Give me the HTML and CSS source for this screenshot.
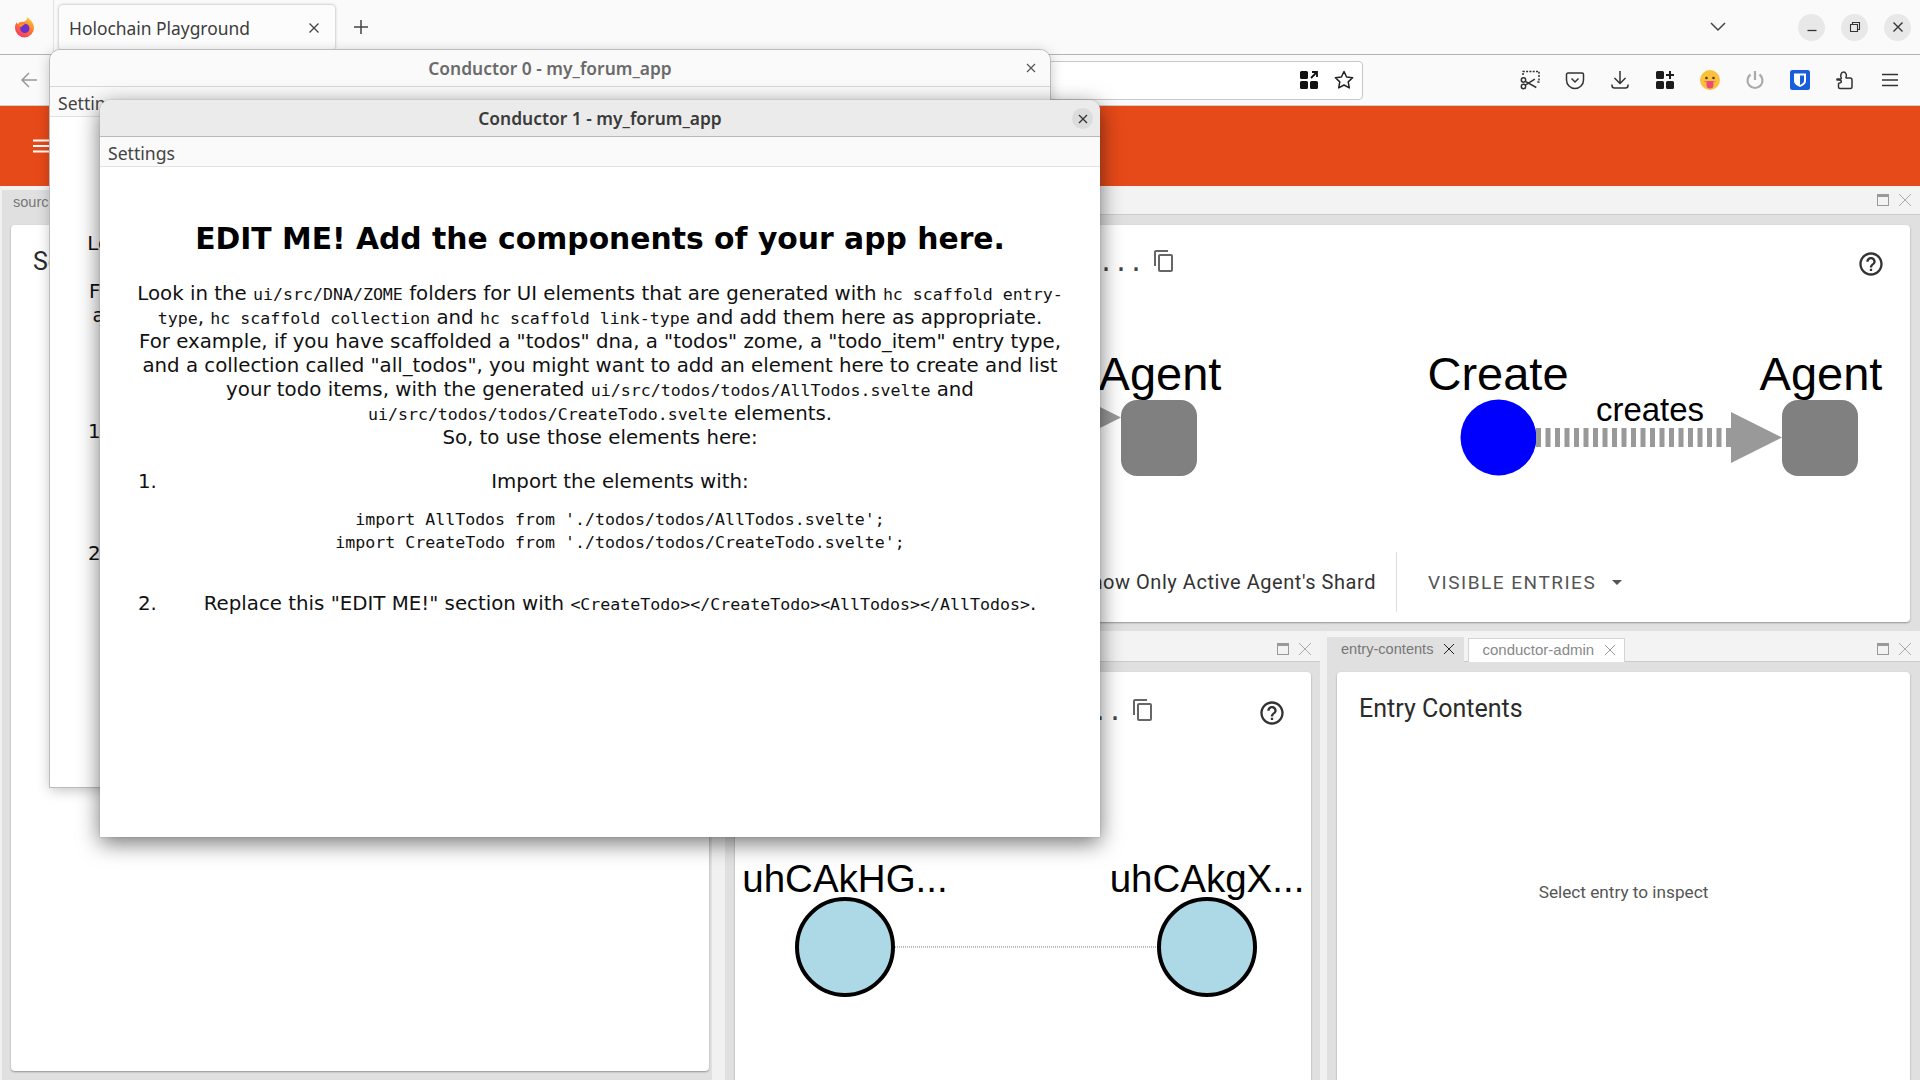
FILE: index.html
```html
<!DOCTYPE html>
<html lang="en">
<head>
  <meta charset="UTF-8" />
  <meta name="viewport" content="width=device-width, initial-scale=1.0"/>
  <title>Holochain Playground</title>
  <link rel="stylesheet" href="styles.css">
</head>
<body>

  <!-- browser chrome -->
  <div class="tabbar">
    <div class="ff-logo">
      <svg width="23" height="23" viewBox="0 0 20 20">
        <defs>
          <linearGradient id="ffg" x1="0.8" y1="0" x2="0.2" y2="1">
            <stop offset="0" stop-color="#ffd53a"/>
            <stop offset="0.45" stop-color="#ff7a2e"/>
            <stop offset="1" stop-color="#f0356c"/>
          </linearGradient>
        </defs>
        <path d="M12.5 1c2 1.6 5.8 4.6 5.8 9.2A8.3 8.3 0 0 1 10 18.6a8.3 8.3 0 0 1-8.3-8.4c0-2 .6-3.6 1.6-4.8.2 1 .6 1.500 1.100 1.800C5.300 5.300 7 4.800 9 5.200c1.800-.8 3.500-2.200 3.500-4.200z" fill="url(#ffg)"/>
        <circle cx="10.300" cy="10.800" r="4" fill="#6b2fd0"/>
        <path d="M4.500 7.500c2-1.200 4.500-1 6 0-1.500.2-2.500 1-3 2-1.200-.2-2.300-.8-3-2z" fill="#ff8a2a"/>
      </svg>
    </div>
    <div class="tab">
      <span class="tab-title">Holochain Playground</span>
      <svg class="tab-close" width="12" height="12" viewBox="0 0 12 12"><path d="M1.500 1.500l9 9M10.500 1.500l-9 9" stroke="#444" stroke-width="1.300" fill="none"/></svg>
    </div>
    <svg class="new-tab" width="16" height="16" viewBox="0 0 16 16"><path d="M8 1v14M1 8h14" stroke="#444" stroke-width="1.500"/></svg>
    <div class="tabbar-space"></div>
    <svg class="tab-list" width="16" height="10" viewBox="0 0 16 10"><path d="M1 1l7 7 7-7" stroke="#444" stroke-width="1.500" fill="none"/></svg>
    <div class="win-btns">
      <div class="win-btn"><svg width="12" height="12" viewBox="0 0 12 12"><path d="M1.500 9.500h9" stroke="#333" stroke-width="1.300"/></svg></div>
      <div class="win-btn"><svg width="12" height="12" viewBox="0 0 12 12"><path d="M1.500 3.500h7v7h-7zM3.500 3.500v-2h7v7h-2" stroke="#333" stroke-width="1.100" fill="none"/></svg></div>
      <div class="win-btn"><svg width="12" height="12" viewBox="0 0 12 12"><path d="M1.500 1.500l9 9M10.500 1.500l-9 9" stroke="#333" stroke-width="1.400"/></svg></div>
    </div>
  </div>

  <div class="navbar">
    <svg class="back" width="20" height="20" viewBox="0 0 20 20"><path d="M18 10H3M10 3l-7 7 7 7" stroke="#999" stroke-width="1.500" fill="none"/></svg>
    <div class="urlbar">
      <svg width="18" height="18" viewBox="0 0 18 18"><path d="M0 1.500A1.500 1.500 0 0 1 1.500 0h5A1.500 1.500 0 0 1 8 1.500v5A1.500 1.500 0 0 1 6.500 8h-5A1.500 1.500 0 0 1 0 6.500zM0 11.500A1.500 1.500 0 0 1 1.500 10h5A1.500 1.500 0 0 1 8 11.500v5A1.500 1.500 0 0 1 6.500 18h-5A1.500 1.500 0 0 1 0 16.500zM10 11.500a1.500 1.500 0 0 1 1.500-1.500h5a1.500 1.500 0 0 1 1.500 1.500v5a1.500 1.500 0 0 1-1.500 1.500h-5a1.500 1.500 0 0 1-1.500-1.500z" fill="#111"/><path d="M11 7l6-6M12 1h5v5" stroke="#111" stroke-width="1.800" fill="none"/></svg>
      <svg width="20" height="20" viewBox="0 0 20 20"><path d="M10 1.500l2.600 5.500 6 .8-4.400 4.100 1.100 6L10 15l-5.300 2.900 1.100-6L1.400 7.800l6-.8z" stroke="#222" stroke-width="1.500" stroke-linejoin="round" fill="none"/></svg>
    </div>
    <div class="toolbar">
      <div class="tool"><svg width="20" height="20" viewBox="0 0 20 20" fill="none" stroke="#333" stroke-width="1.500"><path d="M3 5V1.500h16V12h-3" stroke-dasharray="2 1.300"/><circle cx="3.500" cy="10" r="2.200"/><circle cx="3.500" cy="16.500" r="2.200"/><path d="M5.300 11.300l11 6.200M5.300 15.200l9.500-6"/></svg></div>
      <div class="tool"><svg width="20" height="20" viewBox="0 0 20 20" fill="none" stroke="#333" stroke-width="1.500"><path d="M3 3h14a1.500 1.500 0 0 1 1.500 1.500V10a8.500 8.500 0 0 1-17 0V4.500A1.500 1.500 0 0 1 3 3z"/><path d="M6.500 8.500l3.500 3.500 3.500-3.500"/></svg></div>
      <div class="tool"><svg width="20" height="20" viewBox="0 0 20 20" fill="none" stroke="#333" stroke-width="1.500"><path d="M10 1v12M4.500 8l5.500 5.500L15.500 8M2 14.500v1A2.500 2.500 0 0 0 4.500 18h11a2.500 2.500 0 0 0 2.500-2.500v-1"/></svg></div>
      <div class="tool"><svg width="18" height="18" viewBox="0 0 18 18"><path d="M0 1.500A1.500 1.500 0 0 1 1.500 0h5A1.500 1.500 0 0 1 8 1.500v5A1.500 1.500 0 0 1 6.500 8h-5A1.500 1.500 0 0 1 0 6.500zM0 11.500A1.500 1.500 0 0 1 1.500 10h5A1.500 1.500 0 0 1 8 11.500v5A1.500 1.500 0 0 1 6.500 18h-5A1.500 1.500 0 0 1 0 16.500zM10 11.500a1.500 1.500 0 0 1 1.500-1.500h5a1.500 1.500 0 0 1 1.500 1.500v5a1.500 1.500 0 0 1-1.500 1.500h-5a1.500 1.500 0 0 1-1.500-1.500z" fill="#1c1c1c"/><path d="M14 0v8M10 4h8" stroke="#1c1c1c" stroke-width="2"/></svg></div>
      <div class="tool"><svg width="20" height="20" viewBox="0 0 20 20"><circle cx="10" cy="10" r="10" fill="#fbc13d"/><circle cx="6.500" cy="8" r="1.300" fill="#5a3b10"/><circle cx="13.500" cy="8" r="1.300" fill="#5a3b10"/><path d="M4 11h12v.5H13.500V15a3.500 3.500 0 0 1-7 0v-3.500H4z" fill="#ec4a78"/></svg></div>
      <div class="tool"><svg width="20" height="20" viewBox="0 0 20 20" fill="none" stroke="#aaa" stroke-width="2.200"><path d="M5.500 4.500a7.500 7.500 0 1 0 9 0"/><path d="M10 1v9"/></svg></div>
      <div class="tool"><svg width="20" height="20" viewBox="0 0 20 20"><rect width="20" height="20" rx="2.500" fill="#175ddc"/><path d="M4 3.500h12v7.500c0 3-3.500 5-6 6-2.500-1-6-3-6-6z" fill="#fff"/><path d="M10 5.500h4v5.500c0 1.800-2 3-4 4z" fill="#175ddc"/></svg></div>
      <div class="tool"><svg width="20" height="20" viewBox="0 0 20 20" fill="none" stroke="#333" stroke-width="1.500" stroke-linejoin="round"><path d="M2 9h3.500c1-.2 1-1 .5-1.800C5.300 6 5.800 2 8.500 2s3.300 3.500 2.600 4.800c-.4.700-.3 1.200.4 1.200H15a2 2 0 0 1 2 2v7a1.500 1.500 0 0 1-1.500 1.500H5a1.500 1.500 0 0 1-1.500-1.500v-3c0-1 .3-1 1-1 2.500 0 2.500-3-.5-3H2z"/></svg></div>
      <div class="tool"><svg width="16" height="14" viewBox="0 0 16 14"><path d="M0 1.500h16M0 7h16M0 12.500h16" stroke="#333" stroke-width="1.400"/></svg></div>
    </div>
  </div>

  <!-- the playground page -->
  <div class="app-header">
    <svg width="18" height="14" viewBox="0 0 18 14"><path d="M0 1.500h18M0 7h18M0 12.500h18" stroke="#fff" stroke-width="2"/></svg>
  </div>

  <div class="layout">
    <div class="panel col-left">
      <div class="panel-head panel-head-top">
        <div class="ptab active">source-chain</div>
      </div>
      <div class="panel-body">
        <div class="card left-card">
          <h3 class="card-title">Source Chain</h3>
        </div>
      </div>
    </div>

    <div class="col-right">
      <div class="panel top-panel">
        <div class="panel-head panel-head-top">
          <div class="ptab active">dht-cells</div>
          <div class="head-space"></div>
          <span class="max-icon"></span>
          <svg class="x-icon" width="14" height="14" viewBox="0 0 14 14"><path d="M1 1l12 12M13 1L1 13" stroke="#aaa"/></svg>
        </div>
        <div class="panel-body">
          <div class="card top-card">
            <div class="hash-row hash-top">
              <span class="hash">uhCAkHG0...</span>
              <svg class="copy" width="24" height="24" viewBox="0 0 24 24"><path d="M16 1H4c-1.100 0-2 .9-2 2v14h2V3h12V1zm3 4H8c-1.100 0-2 .9-2 2v14c0 1.100.9 2 2 2h11c1.100 0 2-.9 2-2V7c0-1.100-.9-2-2-2zm0 16H8V7h11v14z" fill="#666"/></svg>
              <div class="head-space"></div>
              <svg class="help" width="28" height="28" viewBox="0 0 24 24"><path d="M11 18h2v-2h-2v2zm1-16C6.480 2 2 6.480 2 12s4.480 10 10 10 10-4.480 10-10S17.520 2 12 2zm0 18c-4.410 0-8-3.590-8-8s3.590-8 8-8 8 3.590 8 8-3.590 8-8 8zm0-14c-2.210 0-4 1.790-4 4h2c0-1.100.9-2 2-2s2 .9 2 2c0 2-3 1.750-3 5h2c0-2.250 3-2.500 3-5 0-2.210-1.790-4-4-4z" fill="#333"/></svg>
            </div>
            <svg class="graph-top" width="1175" height="210" viewBox="0 0 1175 210">
              <text x="425" y="120" class="node-label" text-anchor="middle">Agent</text>
              <path d="M386 147.500l-51 -25.500v51z" fill="#999"/>
              <rect x="386" y="130" width="76" height="76" rx="16" fill="#808080"/>
              <text x="763" y="120" class="node-label" text-anchor="middle">Create</text>
              <circle cx="763.500" cy="167.500" r="38" fill="#0000ff"/>
              <line x1="801" y1="167.500" x2="996" y2="167.500" stroke="#999" stroke-width="19" stroke-dasharray="5 4.500"/>
              <path d="M1047 167.500l-51 -25.500v51z" fill="#999"/>
              <text x="915" y="151" class="edge-label" text-anchor="middle">creates</text>
              <text x="1086" y="120" class="node-label" text-anchor="middle">Agent</text>
              <rect x="1047" y="130" width="76" height="76" rx="16" fill="#808080"/>
            </svg>
            <div class="controls">
              <span class="shard-label">Show Only Active Agent's Shard</span>
              <span class="controls-sep"></span>
              <span class="visible-btn">Visible Entries</span>
              <span class="caret"></span>
            </div>
          </div>
        </div>
      </div>

      <div class="bottom-row">
        <div class="panel mid-panel">
          <div class="panel-head">
            <div class="ptab active">dht-graph</div>
            <div class="head-space"></div>
            <span class="max-icon"></span>
            <svg class="x-icon" width="14" height="14" viewBox="0 0 14 14"><path d="M1 1l12 12M13 1L1 13" stroke="#aaa"/></svg>
          </div>
          <div class="panel-body">
            <div class="card mid-card">
              <div class="hash-row hash-mid">
                <span class="hash">uhCAkHG0...</span>
                <svg class="copy" width="24" height="24" viewBox="0 0 24 24"><path d="M16 1H4c-1.100 0-2 .9-2 2v14h2V3h12V1zm3 4H8c-1.100 0-2 .9-2 2v14c0 1.100.9 2 2 2h11c1.100 0 2-.9 2-2V7c0-1.100-.9-2-2-2zm0 16H8V7h11v14z" fill="#666"/></svg>
                <div class="head-space"></div>
                <svg class="help" width="28" height="28" viewBox="0 0 24 24"><path d="M11 18h2v-2h-2v2zm1-16C6.480 2 2 6.480 2 12s4.480 10 10 10 10-4.480 10-10S17.520 2 12 2zm0 18c-4.410 0-8-3.590-8-8s3.590-8 8-8 8 3.590 8 8-3.590 8-8 8zm0-14c-2.210 0-4 1.790-4 4h2c0-1.100.9-2 2-2s2 .9 2 2c0 2-3 1.750-3 5h2c0-2.250 3-2.500 3-5 0-2.210-1.790-4-4-4z" fill="#333"/></svg>
              </div>
              <svg class="graph-mid" width="576" height="200" viewBox="0 0 576 200">
                <text x="110" y="58" class="peer-label" text-anchor="middle">uhCAkHG...</text>
                <text x="472" y="58" class="peer-label" text-anchor="middle">uhCAkgX...</text>
                <line x1="158" y1="113" x2="424" y2="113" stroke="#bbb" stroke-width="2" stroke-dasharray="1 1"/>
                <circle cx="110" cy="113" r="48" fill="#add8e6" stroke="#000" stroke-width="4"/>
                <circle cx="472" cy="113" r="48" fill="#add8e6" stroke="#000" stroke-width="4"/>
              </svg>
            </div>
          </div>
        </div>

        <div class="panel right-panel">
          <div class="panel-head">
            <div class="ptab active">entry-contents
              <svg width="12" height="12" viewBox="0 0 12 12"><path d="M1 1l10 10M11 1L1 11" stroke="#222"/></svg>
            </div>
            <div class="ptab">conductor-admin
              <svg width="12" height="12" viewBox="0 0 12 12"><path d="M1 1l10 10M11 1L1 11" stroke="#999"/></svg>
            </div>
            <div class="head-space"></div>
            <span class="max-icon"></span>
            <svg class="x-icon" width="14" height="14" viewBox="0 0 14 14"><path d="M1 1l12 12M13 1L1 13" stroke="#aaa"/></svg>
          </div>
          <div class="panel-body">
            <div class="card entry-card">
              <h3 class="card-title">Entry Contents</h3>
              <p class="entry-empty">Select entry to inspect</p>
            </div>
          </div>
        </div>
      </div>
    </div>
  </div>

  <!-- conductor windows, floating on top -->
  <div class="window window-back">
    <div class="win-title">
      <span>Conductor 0 - my_forum_app</span>
      <svg class="win-x" width="10" height="10" viewBox="0 0 10 10"><path d="M1 1l8 8M9 1L1 9" stroke="#555" stroke-width="1.200"/></svg>
    </div>
    <div class="win-menu">Settings</div>
    <div class="win-content">
      <h1>EDIT ME! Add the components of your app here.</h1>
      <p>Look in the <code>ui/src/DNA/ZOME</code> folders for UI elements that are generated with <code>hc scaffold entry-type</code>, <code>hc scaffold collection</code> and <code>hc scaffold link-type</code> and add them here as appropriate.<br>For example, if you have scaffolded a "todos" dna, a "todos" zome, a "todo_item" entry type, and a collection called "all_todos", you might want to add an element here to create and list your todo items, with the generated <code>ui/src/todos/todos/AllTodos.svelte</code> and <code>ui/src/todos/todos/CreateTodo.svelte</code> elements.<br>So, to use those elements here:</p>
      <ol>
        <li><span class="num">1.</span><div class="li-body">Import the elements with:<pre>import AllTodos from './todos/todos/AllTodos.svelte';
import CreateTodo from './todos/todos/CreateTodo.svelte';</pre></div></li>
        <li><span class="num">2.</span><div class="li-body">Replace this "EDIT ME!" section with <code>&lt;CreateTodo&gt;&lt;/CreateTodo&gt;&lt;AllTodos&gt;&lt;/AllTodos&gt;</code>.</div></li>
      </ol>
    </div>
  </div>

  <div class="window window-front">
    <div class="win-title">
      <span>Conductor 1 - my_forum_app</span>
      <div class="win-x-round"><svg width="10" height="10" viewBox="0 0 10 10"><path d="M1 1l8 8M9 1L1 9" stroke="#333" stroke-width="1.300"/></svg></div>
    </div>
    <div class="win-menu">Settings</div>
    <div class="win-content">
      <h1>EDIT ME! Add the components of your app here.</h1>
      <p>Look in the <code>ui/src/DNA/ZOME</code> folders for UI elements that are generated with <code>hc scaffold entry-type</code>, <code>hc scaffold collection</code> and <code>hc scaffold link-type</code> and add them here as appropriate.<br>For example, if you have scaffolded a "todos" dna, a "todos" zome, a "todo_item" entry type, and a collection called "all_todos", you might want to add an element here to create and list your todo items, with the generated <code>ui/src/todos/todos/AllTodos.svelte</code> and <code>ui/src/todos/todos/CreateTodo.svelte</code> elements.<br>So, to use those elements here:</p>
      <ol>
        <li><span class="num">1.</span><div class="li-body">Import the elements with:<pre>import AllTodos from './todos/todos/AllTodos.svelte';
import CreateTodo from './todos/todos/CreateTodo.svelte';</pre></div></li>
        <li><span class="num">2.</span><div class="li-body">Replace this "EDIT ME!" section with <code>&lt;CreateTodo&gt;&lt;/CreateTodo&gt;&lt;AllTodos&gt;&lt;/AllTodos&gt;</code>.</div></li>
      </ol>
    </div>
  </div>

</body>
</html>
```

FILE: styles.css
```css
* {
  box-sizing: border-box;
}
html, body {
  margin: 0;
  height: 1080px;
  overflow: hidden;
}
body {
  font-family: "Liberation Sans", Arial, sans-serif;
  background: #e0e0e0;
  position: relative;
}

/* browser chrome */
.tabbar {
  height: 55px;
  display: flex;
  align-items: center;
  background: #fafafa;
  border-bottom: 1px solid #b4b4b4;
}
.ff-logo {
  width: 54px;
  height: 54px;
  display: flex;
  align-items: center;
  justify-content: center;
  padding-right: 5px;
  border-right: 1px solid #e2e2e2;
}
.tab {
  width: 276px;
  height: 45px;
  margin-left: 5px;
  margin-top: 1px;
  padding: 0 15px 0 10px;
  display: flex;
  align-items: center;
  justify-content: space-between;
  background: #fcfcfc;
  border-radius: 4px;
  box-shadow: 0 0 3px rgba(0,0,0,0.35);
}
.tab-title {
  font-family: "Noto Sans", sans-serif;
  font-size: 17.400px;
  color: #3c3c3c;
}
.new-tab {
  margin-left: 18px;
}
.tabbar-space {
  flex: 1;
}
.tab-list {
  margin-right: 72px;
}
.win-btns {
  display: flex;
  gap: 16px;
  padding-right: 9px;
}
.win-btn {
  width: 27px;
  height: 27px;
  border-radius: 50%;
  background: #e8e8e8;
  display: flex;
  align-items: center;
  justify-content: center;
}

.navbar {
  height: 51px;
  display: flex;
  align-items: center;
  background: #fafafa;
  border-bottom: 1px solid #cfcfcf;
}
.back {
  margin-left: 19px;
}
.urlbar {
  flex: 1;
  height: 39px;
  margin-left: 160px;
  margin-right: 144px;
  padding-right: 8px;
  display: flex;
  align-items: center;
  justify-content: flex-end;
  gap: 16px;
  background: #fff;
  border: 1px solid #c8c8c8;
  border-radius: 4px;
}
.toolbar {
  display: flex;
  padding-right: 8px;
}
.tool {
  width: 45px;
  height: 24px;
  display: flex;
  align-items: center;
  justify-content: center;
}

/* page */
.app-header {
  height: 80px;
  padding-left: 33px;
  display: flex;
  align-items: center;
  background: #e64a19;
}
.layout {
  display: flex;
  height: 894px;
  background: #f1f1f1;
}
.panel {
  display: flex;
  flex-direction: column;
  background: #e0e0e0;
}
.col-left {
  width: 712px;
  border-left: 2px solid #f1f1f1;
}
.col-right {
  width: 1195px;
  margin-left: 13px;
  display: flex;
  flex-direction: column;
}
.top-panel {
  height: 445px;
}
.bottom-row {
  flex: 1;
  display: flex;
  min-height: 0;
}
.mid-panel {
  width: 595px;
}
.right-panel {
  width: 593px;
  margin-left: 7px;
}
.panel-head {
  height: 31px;
  flex: none;
  display: flex;
  align-items: flex-end;
  padding-right: 8px;
  background: #f3f3f3;
  border-bottom: 1px solid #ccc;
}
.panel-head-top {
  height: 29px;
}
.head-space {
  flex: 1;
}
.ptab {
  height: 24px;
  padding: 0 8px 2px 13px;
  display: flex;
  align-items: center;
  gap: 10px;
  font-size: 15px;
  color: #888;
  background: #fff;
  border: 1px solid #d4d4d4;
  border-bottom: none;
  margin-right: 4px;
  margin-bottom: -1px;
}
.ptab.active {
  height: 25px;
  font-size: 14.600px;
  color: #777;
  background: #e0e0e0;
  border-color: #e0e0e0;
}
.panel-head-top .ptab {
  font-size: 14.500px;
  padding-left: 10px;
}
.max-icon {
  width: 12px;
  height: 12px;
  margin-right: 9px;
  margin-bottom: 6px;
  border: 1px solid #999;
  border-top-width: 3px;
}
.x-icon {
  margin-bottom: 5px;
}
.panel-head-top .max-icon {
  margin-bottom: 8px;
}
.panel-head-top .x-icon {
  margin-bottom: 7px;
}
.panel-body {
  flex: 1;
  min-height: 0;
  padding: 10px 10px 9px 10px;
}
.mid-panel .panel-body {
  padding-right: 9px;
}
.col-left .panel-body {
  padding-left: 9px;
  padding-right: 3px;
}
.card {
  height: 100%;
  background: #fff;
  border-radius: 4px;
  box-shadow: 0 1px 2px rgba(0,0,0,0.35);
  overflow: hidden;
}
.mid-card, .entry-card {
  height: 500px;
}
.card-title {
  margin: 0;
  padding: 22px 22px 18px;
  font-family: Roboto, sans-serif;
  font-size: 25px;
  font-weight: 400;
  color: #2b2b2b;
}
.entry-empty {
  margin: 0;
  padding-top: 141px;
  text-align: center;
  font-family: Roboto, sans-serif;
  font-size: 17.200px;
  color: #555;
}
.hash-row {
  display: flex;
  align-items: center;
}
.hash-top {
  padding: 22px 25px 0 243px;
}
.hash-mid {
  padding: 24px 25px 0 222px;
}
.hash {
  font-family: "DejaVu Sans Mono", monospace;
  font-size: 25px;
  color: #444;
}
.copy {
  margin-left: 8px;
  margin-bottom: 4px;
}
.help {
  margin-top: 3px;
}
.graph-top {
  display: block;
  margin-top: -8px;
}
.graph-mid {
  display: block;
  margin-top: 107px;
}
.node-label {
  font-family: "Liberation Sans", sans-serif;
  font-size: 47px;
}
.edge-label {
  font-family: "Liberation Sans", sans-serif;
  font-size: 33px;
}
.peer-label {
  font-family: "Liberation Sans", sans-serif;
  font-size: 38.500px;
}
.controls {
  height: 60px;
  margin-top: 72px;
  padding-left: 320px;
  display: flex;
  align-items: center;
  font-family: Roboto, sans-serif;
  font-size: 20px;
  letter-spacing: 0.55px;
  color: #333;
}
.shard-label {
  width: 321px;
  text-align: right;
  white-space: nowrap;
}
.controls-sep {
  width: 1px;
  height: 60px;
  margin-left: 20px;
  margin-right: 31px;
  background: #ddd;
}
.visible-btn {
  font-size: 19px;
  text-transform: uppercase;
  letter-spacing: 1.500px;
  color: #555;
}
.caret {
  margin-left: 16px;
  border-left: 5px solid transparent;
  border-right: 5px solid transparent;
  border-top: 5px solid #555;
}

/* floating windows */
.window {
  position: absolute;
  display: flex;
  flex-direction: column;
  background: #fff;
  overflow: hidden;
  border-radius: 10px 10px 0 0;
}
.window-back {
  left: 50px;
  top: 50px;
  width: 1000px;
  height: 737px;
  outline: 1px solid #bbb;
  box-shadow: 0 3px 14px rgba(0,0,0,0.25);
}
.window-front {
  left: 100px;
  top: 100px;
  width: 1000px;
  height: 737px;
  box-shadow: 0 0 1px #666, 0 6px 22px rgba(0,0,0,0.55);
}
.win-title {
  height: 37px;
  flex: none;
  display: flex;
  align-items: center;
  justify-content: center;
  position: relative;
  font-family: "Noto Sans", sans-serif;
  font-size: 17.400px;
  font-weight: 600;
  color: #6a6a6a;
  background: #fafafa;
  border-bottom: 1px solid #d8d8d8;
}
.window-front .win-title {
  color: #3a3a3a;
  background: #ebebeb;
  border-bottom-color: #b9b9b9;
}
.win-x {
  position: absolute;
  right: 14px;
  top: 13px;
}
.win-x-round {
  position: absolute;
  right: 7px;
  top: 8px;
  width: 21px;
  height: 21px;
  border-radius: 50%;
  background: #dcdcdc;
  display: flex;
  align-items: center;
  justify-content: center;
}
.win-menu {
  height: 30px;
  flex: none;
  padding-left: 8px;
  padding-top: 2px;
  display: flex;
  align-items: center;
  font-family: "Noto Sans", sans-serif;
  font-size: 17.600px;
  color: #444;
  background: #fafafa;
  border-bottom: 1px solid #e2e2e2;
}
.win-content {
  flex: 1;
  padding: 51px 36px 0;
  text-align: center;
  font-family: "DejaVu Sans", sans-serif;
  font-size: 19.800px;
  line-height: 24px;
  color: #111;
}
h1 {
  margin: 0 0 22px;
  font-size: 29.800px;
  line-height: 42px;
  font-weight: 700;
  color: #000;
}
p {
  margin: 0;
}
code, pre {
  font-family: "DejaVu Sans Mono", monospace;
  font-size: 16.600px;
  line-height: 1;
}
ol {
  list-style: none;
  margin: 20px 0 0;
  padding: 0;
}
li {
  display: flex;
  margin-bottom: 22px;
}
.num {
  width: 40px;
  text-align: left;
  flex: none;
  padding-left: 2px;
}
.li-body {
  flex: 1;
}
pre {
  margin: 14px 0 0;
  line-height: 23px;
  padding-bottom: 16px;
}
```
